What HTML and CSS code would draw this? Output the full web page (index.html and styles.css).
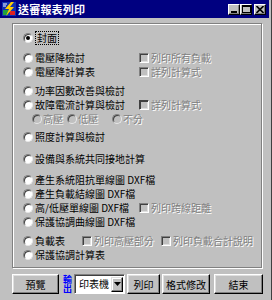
FILE: index.html
```html
<!DOCTYPE html>
<html lang="zh-Hant">
<head>
    <meta charset="UTF-8">
    <title>送審報表列印</title>
    <link rel="stylesheet" href="styles.css">
</head>
<body>
    <div class="window">
        <div class="titlebar">
            <svg class="app-icon" width="14" height="14" viewBox="0 0 14 14">
                <rect x="0" y="0" width="14" height="14" fill="#1030b0"/>
                <rect x="1" y="8" width="5" height="5" fill="#20a040"/>
                <rect x="8" y="9" width="5" height="4" fill="#e02020"/>
                <polygon points="9,0 3,7 7,7 4,14 12,5 8,5 12,0" fill="#ffd000"/>
                <line x1="1" y1="2" x2="5" y2="2" stroke="#fff" stroke-width="1"/>
                <line x1="1" y1="4" x2="4" y2="4" stroke="#fff" stroke-width="1"/>
            </svg>
            <span class="title">送審報表列印</span>
            <div class="caption-btns">
                <span class="cap-btn">
                    <svg width="8" height="7" viewBox="0 0 8 7"><rect x="1" y="5" width="6" height="2" fill="#000"/></svg>
                </span>
                <span class="cap-btn">
                    <svg width="9" height="8" viewBox="0 0 9 8"><rect x="0.5" y="0.5" width="8" height="7" fill="none" stroke="#000"/><rect x="0" y="0" width="9" height="2" fill="#000"/></svg>
                </span>
                <span class="cap-btn close">
                    <svg width="8" height="7" viewBox="0 0 8 7"><path d="M0.5 0 L7.5 7 M7.5 0 L0.5 7" stroke="#000" stroke-width="1.6"/></svg>
                </span>
            </div>
        </div>

        <div class="client">
            <div class="groupbox">
                <div class="section s1">
                    <div class="row"><span class="radio checked"></span><span class="opt focus">封面</span></div>
                </div>

                <div class="section s2">
                    <div class="row">
                        <span class="radio"></span><span class="opt opt-wide">電壓降檢討</span>
                        <span class="check"></span><span class="dim">列印所有負載</span>
                    </div>
                    <div class="row">
                        <span class="radio"></span><span class="opt opt-wide">電壓降計算表</span>
                        <span class="check"></span><span class="dim">詳列計算式</span>
                    </div>
                </div>

                <div class="section s3">
                    <div class="row"><span class="radio"></span><span class="opt">功率因數改善與檢討</span></div>
                    <div class="row">
                        <span class="radio"></span><span class="opt opt-wide">故障電流計算與檢討</span>
                        <span class="check dark"></span><span class="dim">詳列計算式</span>
                    </div>
                    <div class="row sub-row">
                        <span class="sub sub-1"><span class="radio off"></span><span class="dim">高壓</span></span>
                        <span class="sub sub-2"><span class="radio off"></span><span class="dim">低壓</span></span>
                        <span class="sub"><span class="radio off"></span><span class="dim">不分</span></span>
                    </div>
                </div>

                <div class="section s4">
                    <div class="row"><span class="radio"></span><span class="opt">照度計算與檢討</span></div>
                </div>

                <div class="section s5">
                    <div class="row"><span class="radio"></span><span class="opt">設備與系統共同接地計算</span></div>
                </div>

                <div class="section s6">
                    <div class="row"><span class="radio"></span><span class="opt">產生系統阻抗單線圖 DXF檔</span></div>
                    <div class="row"><span class="radio"></span><span class="opt">產生負載結線圖 DXF檔</span></div>
                    <div class="row">
                        <span class="radio"></span><span class="opt opt-wide">高/低壓單線圖 DXF檔</span>
                        <span class="check"></span><span class="dim">列印跨線距離</span>
                    </div>
                    <div class="row"><span class="radio"></span><span class="opt">保護協調曲線圖 DXF檔</span></div>
                </div>

                <div class="section s7">
                    <div class="row">
                        <span class="radio"></span><span class="opt opt-load">負載表</span>
                        <span class="check"></span><span class="dim dim-gap">列印高壓部分</span>
                        <span class="check"></span><span class="dim">列印負載合計說明</span>
                    </div>
                    <div class="row"><span class="radio"></span><span class="opt">保護協調計算表</span></div>
                </div>
            </div>

            <div class="toolbar">
                <button class="btn btn-preview">預覽</button>
                <span class="out-label">輸出</span>
                <div class="combo">
                    <span class="combo-text">印表機</span>
                    <span class="combo-drop">
                        <svg width="7" height="4" viewBox="0 0 7 4"><polygon points="0,0 7,0 3.5,4" fill="#000"/></svg>
                    </span>
                </div>
                <button class="btn btn-print">列印</button>
                <button class="btn btn-format">格式修改</button>
                <button class="btn btn-end">結束</button>
            </div>
        </div>
    </div>
</body>
</html>
```

FILE: styles.css
```css
* {
    box-sizing: border-box;
}
body {
    margin: 0;
    width: 272px;
    height: 300px;
    overflow: hidden;
    background-color: #c0c0c0;
    font-family: "Noto Sans CJK TC", "Liberation Sans", sans-serif;
    font-size: 10px;
    color: #000;
}
.window {
    width: 272px;
    height: 300px;
    padding-right: 2px;
    border-right: 1px solid #404040;
}
.titlebar {
    height: 18px;
    background-color: #000080;
    display: flex;
    align-items: center;
    padding: 0 3px 0 2px;
}
.app-icon {
    flex: none;
    margin-right: 2px;
}
.title {
    color: #fff;
    font-weight: bold;
    font-size: 11px;
    letter-spacing: 0.2px;
}
.caption-btns {
    margin-left: auto;
    display: flex;
}
.cap-btn {
    width: 12px;
    height: 11px;
    background-color: #c0c0c0;
    border: 1px solid;
    border-color: #fff #000 #000 #fff;
    box-shadow: inset -1px -1px 0 #808080;
    display: flex;
    align-items: center;
    justify-content: center;
}
.cap-btn.close {
    margin-left: 2px;
}

.client {
    padding: 5px 0 0 12px;
}
.groupbox {
    width: 250px;
    height: 245px;
    border: 1px solid #808080;
    box-shadow: 1px 1px 0 #fff, inset 1px 1px 0 #fff;
    padding: 7px 0 0 10px;
}
.section.s2 { margin-top: 6px; }
.section.s3 { margin-top: 5px; }
.section.s4 { margin-top: 4px; }
.section.s5 { margin-top: 8px; }
.section.s6 { margin-top: 7px; }
.section.s7 { margin-top: 5px; }
.row {
    display: flex;
    align-items: center;
    height: 14px;
    line-height: 12px;
    white-space: nowrap;
}

.radio {
    flex: none;
    width: 10px;
    height: 10px;
    border-radius: 50%;
    background-color: #fff;
    border: 1px solid;
    border-color: #808080 #e8e8e8 #e8e8e8 #808080;
    box-shadow: inset 1px 1px 0 #404040;
    margin-right: 2px;
    position: relative;
}
.radio.off {
    background-color: #c0c0c0;
}
.radio.checked::after {
    content: "";
    position: absolute;
    left: 2px;
    top: 2px;
    width: 4px;
    height: 4px;
    border-radius: 50%;
    background-color: #000;
}
.opt.focus {
    outline: 1px dotted #000;
    outline-offset: 0;
    padding: 0 1px;
    margin-left: 1px;
}
.opt-wide {
    width: 104px;
}
.opt-load {
    width: 47px;
}
.check {
    flex: none;
    width: 10px;
    height: 10px;
    background-color: #c0c0c0;
    border: 1px solid;
    border-color: #808080 #fff #fff #808080;
    box-shadow: inset 1px 1px 0 #404040, inset -1px -1px 0 #dfdfdf;
    margin-right: 2px;
}
.check.dark {
    border-color: #404040 #fff #fff #404040;
}
.dim {
    color: #808080;
    text-shadow: 1px 1px 0 #fff;
}
.dim-gap {
    margin-right: 7px;
}
.sub-row {
    padding-left: 9px;
}
.sub {
    display: flex;
    align-items: center;
}
.sub .radio {
    margin-right: 1px;
}
.sub-1 {
    width: 35px;
}
.sub-2 {
    width: 45px;
}

.toolbar {
    margin-top: 6px;
    display: flex;
    align-items: center;
    height: 20px;
}
.btn {
    height: 20px;
    padding: 0;
    background-color: #c0c0c0;
    border: 1px solid;
    border-color: #fff #000 #000 #fff;
    box-shadow: inset -1px -1px 0 #808080, inset 1px 1px 0 #dfdfdf;
    font-family: inherit;
    font-size: 10px;
    color: #000;
}
.btn-preview {
    width: 47px;
}
.btn-print {
    width: 33px;
    margin-left: 2px;
}
.btn-format {
    width: 48px;
    margin-left: 2px;
}
.btn-end {
    width: 49px;
    margin-left: 4px;
}
.out-label {
    width: 9px;
    height: 19px;
    margin-left: 4px;
    margin-right: 2px;
    color: #0000ff;
    font-size: 9px;
    line-height: 9px;
    font-weight: bold;
    writing-mode: vertical-rl;
    text-orientation: upright;
    letter-spacing: 0.5px;
}
.combo {
    width: 51px;
    height: 20px;
    background-color: #fff;
    border: 1px solid;
    border-color: #808080 #fff #fff #808080;
    box-shadow: inset 1px 1px 0 #404040;
    display: flex;
    align-items: center;
    padding: 2px 1px 2px 4px;
}
.combo-text {
    flex: 1;
    line-height: 12px;
}
.combo-drop {
    flex: none;
    width: 12px;
    height: 15px;
    background-color: #c0c0c0;
    border: 1px solid;
    border-color: #dfdfdf #000 #000 #dfdfdf;
    box-shadow: inset -1px -1px 0 #808080, inset 1px 1px 0 #fff;
    display: flex;
    align-items: center;
    justify-content: center;
}
```
